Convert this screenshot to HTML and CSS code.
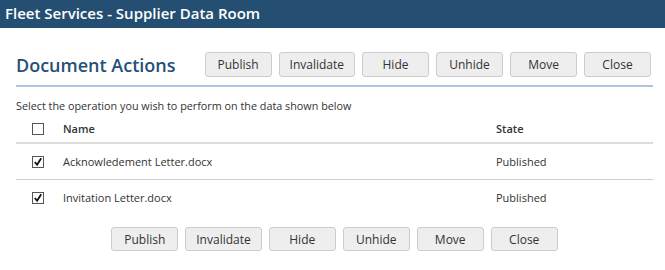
FILE: index.html
```html
<!DOCTYPE html>
<html lang="en">
<head>
    <meta charset="UTF-8">
    <meta name="viewport" content="width=device-width, initial-scale=1.0">
    <title>Fleet Services - Supplier Data Room</title>
    <link rel="stylesheet" href="styles.css">
</head>
<body>
    <div id="header">Fleet Services - Supplier Data Room</div>

    <div id="content">
        <div class="title-row">
            <h1>Document Actions</h1>
            <div class="actions">
                <button>Publish</button>
                <button>Invalidate</button>
                <button>Hide</button>
                <button>Unhide</button>
                <button>Move</button>
                <button>Close</button>
            </div>
        </div>

        <p class="hint">Select the operation you wish to perform on the data shown below</p>

        <div class="docs">
            <div class="row head">
                <span class="check"></span>
                <span>Name</span>
                <span>State</span>
            </div>
            <div class="row">
                <span class="check on"><svg viewBox="0 0 11 11"><path d="M2 5.5 L4.5 8.5 L9 1.5" /></svg></span>
                <span>Acknowledement Letter.docx</span>
                <span>Published</span>
            </div>
            <div class="row last">
                <span class="check on"><svg viewBox="0 0 11 11"><path d="M2 5.5 L4.5 8.5 L9 1.5" /></svg></span>
                <span>Invitation Letter.docx</span>
                <span>Published</span>
            </div>
        </div>

        <div class="actions bottom">
            <button>Publish</button>
            <button>Invalidate</button>
            <button>Hide</button>
            <button>Unhide</button>
            <button>Move</button>
            <button>Close</button>
        </div>
    </div>
</body>
</html>
```

FILE: styles.css
```css
body {
    margin: 0;
    padding: 0;
    background: #fff;
    color: #333;
    font-family: "Open Sans", Arial, sans-serif;
}

#header {
    height: 28px;
    line-height: 27px;
    padding-left: 5px;
    background: #254f72;
    color: #fff;
    font-size: 15px;
    font-weight: 600;
}

#content {
    padding: 0 12px 0 16px;
}

.title-row {
    display: flex;
    align-items: center;
    padding: 24px 2px 8px 0;
    border-bottom: 2px solid #afc4da;
}

h1 {
    margin: 0;
    font-size: 18px;
    font-weight: 600;
    color: #24507a;
    flex: 1;
}

.actions {
    display: flex;
    gap: 7px;
}

button {
    height: 25px;
    min-width: 67px;
    padding: 0 10px;
    background: #eee;
    border: 1px solid #ccc;
    border-radius: 3px;
    color: #333;
    font-family: "Open Sans", Arial, sans-serif;
    font-size: 12px;
}

.hint {
    margin: 11px 0 0;
    font-size: 10.8px;
}

.docs {
    margin-top: 2px;
}

.row {
    display: grid;
    grid-template-columns: 47px 1fr 157px;
    align-items: center;
    height: 35px;
    font-size: 11px;
    border-bottom: 1px solid #ccc;
}

.row.head {
    height: 27px;
    font-weight: 600;
    border-bottom: 2px solid #ddd;
}

.row.last {
    border-bottom: none;
}

.check {
    width: 10px;
    height: 10px;
    margin-left: 16px;
    border: 1px solid #555;
    background: #fff;
}

.check svg {
    display: block;
    width: 10px;
    height: 10px;
}

.check path {
    fill: none;
    stroke: #111;
    stroke-width: 2;
}

.actions.bottom {
    justify-content: center;
    margin-top: 12px;
}

.actions.bottom button {
    height: 24px;
}
```
